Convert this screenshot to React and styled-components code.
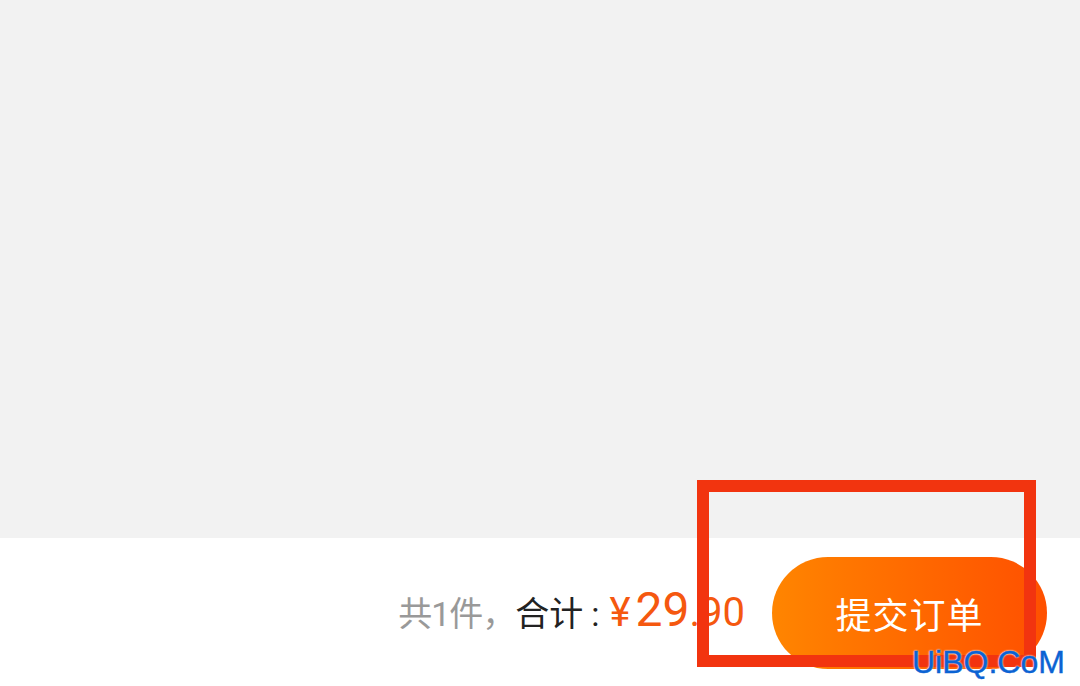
import React from "react";
import styled, { createGlobalStyle } from "styled-components";

const GlobalStyle = createGlobalStyle`
  html, body {
    margin: 0;
    padding: 0;
    height: 100%;
  }
  body {
    font-family: Roboto, "Noto Sans CJK SC", sans-serif;
  }
  #root {
    height: 100%;
  }
`;

const Page = styled.div`
  position: relative;
  display: flex;
  flex-direction: column;
  height: 100vh;
  overflow: hidden;
`;

const Content = styled.main`
  flex: 1;
  background: #f2f2f2;
`;

const CheckoutBar = styled.footer`
  height: 148px;
  flex-shrink: 0;
  background: #ffffff;
  display: flex;
  align-items: center;
  justify-content: flex-end;
  padding-right: 33px;
  box-sizing: border-box;
`;

const Summary = styled.div`
  display: flex;
  align-items: baseline;
  margin-right: 27px;
  margin-top: -2px;
`;

const Label = styled.span`
  font-family: Roboto, "Noto Sans CJK SC", sans-serif;
  font-size: 34px;
  color: ${(p) => p.$color};
  letter-spacing: ${(p) => p.$tracking || 0}px;
  margin-right: ${(p) => p.$gap || 0}px;
`;

const Colon = styled.span`
  margin-left: 8px;
`;

const Price = styled.span`
  font-family: Roboto, "Noto Sans CJK SC", sans-serif;
  color: #f5580f;
  font-size: ${(p) => p.$size}px;
  margin-right: ${(p) => p.$gap || 0}px;
  line-height: 1;
`;

const SubmitButton = styled.button`
  width: 275px;
  height: 112px;
  border: none;
  border-radius: 56px;
  background: linear-gradient(90deg, #ff8500 0%, #ff6a00 50%, #ff5000 100%);
  color: #ffffff;
  font-family: "Noto Sans CJK SC", sans-serif;
  font-size: 36px;
  letter-spacing: 1px;
  cursor: pointer;
  margin-top: 2px;
`;

const Highlight = styled.div`
  position: absolute;
  left: 697px;
  top: 480px;
  width: 339px;
  height: 187px;
  border: 12px solid #f2340f;
  box-sizing: border-box;
  pointer-events: none;
`;

const Watermark = styled.div`
  position: absolute;
  left: 912px;
  top: 646px;
  font-family: "Liberation Sans", Arial, sans-serif;
  font-size: 32px;
  color: #0b63d3;
  line-height: 1;
  -webkit-text-stroke: 0.4px #0b63d3;
  text-shadow: 0 0 2px #ffffff, 0 0 2px #ffffff;
  pointer-events: none;
`;

export default function App() {
  return (
    <>
      <GlobalStyle />
      <Page>
        <Content />
        <CheckoutBar>
          <Summary>
            <Label $color="#999999" $tracking={-1}>共1件，</Label>
            <Label $color="#222222" $gap={10}>
              合计<Colon>:</Colon>
            </Label>
            <Price $size={40} $gap={5}>¥</Price>
            <Price $size={48}>29</Price>
            <Price $size={40}>.90</Price>
          </Summary>
          <SubmitButton>提交订单</SubmitButton>
        </CheckoutBar>
        <Highlight />
        <Watermark>UiBQ.CoM</Watermark>
      </Page>
    </>
  );
}
